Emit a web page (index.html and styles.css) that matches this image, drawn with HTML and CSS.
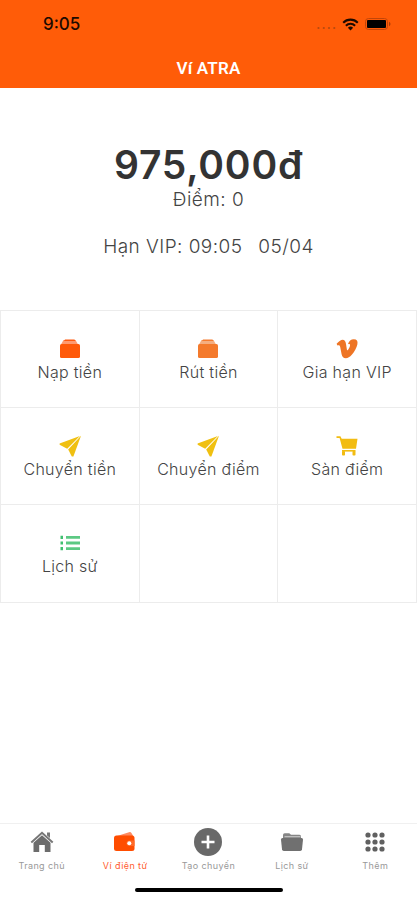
FILE: index.html
```html
<!DOCTYPE html>
<html lang="vi">
<head>
  <meta charset="UTF-8">
  <meta name="viewport" content="width=device-width, initial-scale=1">
  <title>Ví ATRA</title>
  <link rel="stylesheet" href="styles.css">
</head>
<body>
  <header class="header">
    <div class="status">
      <span class="status-time">9:05</span>
      <div class="status-icons">
        <svg width="19" height="4" viewBox="0 0 19 4" fill="#b54a10"><circle cx="1.5" cy="2" r="1.1"/><circle cx="6.8" cy="2" r="1.1"/><circle cx="12" cy="2" r="1.1"/><circle cx="17.3" cy="2" r="1.1"/></svg>
        <svg width="17" height="13" viewBox="0 0 17 13" fill="none" stroke="#1c0a00" stroke-width="2.1"><path d="M1.2 4.7a10.3 10.3 0 0 1 14.6 0"/><path d="M3.9 7.7a6.5 6.5 0 0 1 9.2 0"/><path d="M8.5 12.4 5.9 9.8a3.7 3.7 0 0 1 5.2 0z" fill="#1c0a00" stroke="none"/></svg>
        <svg width="26" height="12" viewBox="0 0 26 12"><rect x=".5" y=".5" width="22" height="11" rx="3" fill="none" stroke="#c24508"/><rect x="2" y="2" width="19" height="8" rx="1" fill="#000"/><path d="M24 3.8v4.4q1.5-.8 1.5-2.2T24 3.8z" fill="#a83c08"/></svg>
      </div>
    </div>
    <h1 class="title">Ví ATRA</h1>
  </header>

  <section class="balance">
    <div class="amount">975,000đ</div>
    <div class="points">Điểm: 0</div>
    <div class="expiry">Hạn VIP: 09:05 <span>05/04</span></div>
  </section>

  <main class="grid">
    <div class="cell">
      <svg class="icon" viewBox="0 0 22 22"><path d="M4.5 2h12l2.5 4.5H2z" fill="#ff9a70"/><path d="M6 1.4h9.500l1 1.500H5z" fill="#ff5a10"/><rect x="1" y="6" width="20" height="14" rx="1.6" fill="#ff5a0a"/></svg>
      <span class="label">Nạp tiền</span>
    </div>
    <div class="cell">
      <svg class="icon" viewBox="0 0 22 22"><path d="M4.5 2h12l2.5 4.5H2z" fill="#f5ae80"/><path d="M6 1.4h9.500l1 1.500H5z" fill="#f57c30"/><rect x="1" y="6" width="20" height="14" rx="1.6" fill="#f47a2c"/></svg>
      <span class="label">Rút tiền</span>
    </div>
    <div class="cell">
      <svg class="icon" viewBox="0 0 22 22" fill="#ee7525"><path d="M.6 5.800Q4.500 1.700 6.500 1.700c2.300 0 3.100 1.700 3.500 4.300l1 6.300c.9.200 2.600-2.600 3-4.600.3-1.600-.5-2-2.100-1.400C12.800 3.200 15 1.300 17.800 1.300c3 0 4.200 1.800 3.600 4.900-.6 3.300-2.900 7.300-5.400 10.300-2.200 2.600-4.200 3.700-6.200 3.700-2.300 0-3.600-1.500-4.200-4L4.200 9C3.800 7.300 3 6.700 1.500 7.500z"/></svg>
      <span class="label">Gia hạn VIP</span>
    </div>
    <div class="cell">
      <svg class="icon" viewBox="0 0 22 22" fill="#f0c010"><path d="M20.900.9.600 8.600v1.200l7.600 4z"/><path d="M22 .8 9.200 14.600l3.600 7h1.600z"/></svg>
      <span class="label">Chuyển tiền</span>
    </div>
    <div class="cell">
      <svg class="icon" viewBox="0 0 22 22" fill="#f0c010"><path d="M20.900.9.600 8.600v1.200l7.600 4z"/><path d="M22 .8 9.200 14.600l3.600 7h1.600z"/></svg>
      <span class="label">Chuyển điểm</span>
    </div>
    <div class="cell">
      <svg class="icon" viewBox="0 0 22 22" fill="#f2bc12"><path d="M.5 1.200h3.900l1.300 2.600H21.500l-1.500 10H6.500L3.600 3H.5z"/><path d="M6 15h13.500v1.600H6z"/><rect x="6" y="16" width="3" height="4.500" rx=".8"/><rect x="16.500" y="16" width="3" height="4.500" rx=".8"/></svg>
      <span class="label">Sàn điểm</span>
    </div>
    <div class="cell">
      <svg class="icon" viewBox="0 0 22 22" fill="#5cc983"><path d="M7 4h14v2.800H7zM7 9.600h14v2.800H7zM7 15.200h14V18H7z"/><path d="M1.500 3.800H4V7H1.500zM1.500 9.400H4v3.200H1.500zM1.500 15H4v3.200H1.500z" fill="#3fbf6f"/></svg>
      <span class="label">Lịch sử</span>
    </div>
    <div class="cell"></div>
    <div class="cell"></div>
  </main>

  <nav class="tabs">
    <div class="tab">
      <svg class="tab-icon" viewBox="0 0 28 28"><path d="M5.500 14.800 14 7.200l8.500 7.600V24h-5.700v-7h-5.600v7H5.500z" fill="#6c6c6c"/><path d="M19 4.500h3v5.500l-3-2.500z" fill="#777"/><path d="m3.300 14.500L14 4.800l10.700 9.700" fill="none" stroke="#777" stroke-width="2"/></svg>
      <span>Trang chủ</span>
    </div>
    <div class="tab active">
      <svg class="tab-icon" viewBox="0 0 28 28"><path d="M4.500 8.500 18 4.200q1.800-.4 2.600 1l1.900 3.300z" fill="#ff8a60"/><rect x="3" y="7.500" width="20.500" height="15.500" rx="2.500" fill="#ff4d00"/><path d="M15.500 15.200q0-2.700 3-2.700h5v5.400h-5q-3 0-3-2.700z" fill="#ff6a28"/><circle cx="18.300" cy="15.200" r="2" fill="#fff"/></svg>
      <span>Ví điện tử</span>
    </div>
    <div class="tab">
      <svg class="tab-icon" viewBox="0 0 28 28"><circle cx="14" cy="14" r="14" fill="#696969"/><path d="M14 7.500v13M7.500 14h13" stroke="#fff" stroke-width="2.600"/></svg>
      <span>Tạo chuyến</span>
    </div>
    <div class="tab">
      <svg class="tab-icon" viewBox="0 0 28 28"><path d="M5 10V7q0-1.700 1.700-1.700h4.600l1.700 1.500h8.500q1.500 0 1.500 1.500V10z" fill="#858585"/><path d="M6.500 8.700h16" stroke="#ccc"/><path d="M4.500 10h19q1.600 0 1.500 1.600l-1 9.600q-.2 1.800-1.800 1.800H5.800Q4.200 23 4 21.200l-1-9.600Q2.900 10 4.500 10z" fill="#707070"/></svg>
      <span>Lịch sử</span>
    </div>
    <div class="tab">
      <svg class="tab-icon" viewBox="0 0 28 28" fill="#606060"><circle cx="7" cy="7" r="2.600"/><circle cx="14" cy="7" r="2.600"/><circle cx="21" cy="7" r="2.600"/><circle cx="7" cy="14" r="2.600"/><circle cx="14" cy="14" r="2.600"/><circle cx="21" cy="14" r="2.600"/><circle cx="7" cy="21" r="2.600"/><circle cx="14" cy="21" r="2.600"/><circle cx="21" cy="21" r="2.600"/></svg>
      <span>Thêm</span>
    </div>
  </nav>
  <div class="home-bar"></div>
</body>
</html>
```
FILE: styles.css
```css
* {
    box-sizing: border-box;
}
body {
    background: #fff;
    color: #444;
    display: flex;
    flex-direction: column;
    font-family: "Inter", "Noto Sans", sans-serif;
    height: 900px;
    margin: 0;
    overflow: hidden;
}
svg {
    display: block;
}

/* header */
.header {
    background: #ff5c08;
    height: 88px;
}
.status {
    align-items: center;
    display: flex;
    height: 48px;
    justify-content: space-between;
    padding: 0 26px 0 43px;
}
.status-time {
    color: #1c0a00;
    font-size: 17px;
    font-weight: 500;
}
.status-icons {
    align-items: center;
    display: flex;
    gap: 6px;
}
.status-icons svg:first-child {
    margin-top: 8px;
}
.title {
    color: #fff;
    font-family: Roboto, sans-serif;
    font-size: 17px;
    font-weight: 600;
    letter-spacing: 0.2px;
    line-height: 40px;
    margin: 0;
    text-align: center;
}

/* balance */
.balance {
    height: 222px;
    padding-top: 52px;
    text-align: center;
}
.amount {
    color: #333;
    font-size: 39px;
    font-weight: 600;
    letter-spacing: 0.8px;
    line-height: 49px;
}
.points,
.expiry {
    font-size: 19px;
    font-weight: 300;
    letter-spacing: 0.45px;
    line-height: 22px;
}
.expiry {
    margin-top: 25px;
}
.expiry span {
    margin-left: 10px;
}

/* actions */
.grid {
    background: #ececec;
    border: 1px solid #ececec;
    display: grid;
    gap: 1px;
    grid-template-columns: repeat(3, 1fr);
    grid-template-rows: 96px 96px 97px;
}
.cell {
    align-items: center;
    background: #fff;
    display: flex;
    flex-direction: column;
    padding-top: 27px;
}
.icon {
    height: 22px;
    width: 22px;
}
.label {
    font-size: 16px;
    font-weight: 300;
    letter-spacing: 0.3px;
    line-height: 24px;
}

/* tab bar */
.tabs {
    border-top: 1px solid #f0f0f0;
    display: grid;
    grid-template-columns: repeat(5, 1fr);
    height: 65px;
    margin-top: auto;
    padding-top: 4px;
}
.tab {
    align-items: center;
    color: #999;
    display: flex;
    flex-direction: column;
    font-size: 9px;
    letter-spacing: 0.4px;
    line-height: 19px;
}
.tab.active {
    color: #ff5c30;
}
.tab-icon {
    height: 28px;
    width: 28px;
}
.home-bar {
    background: #000;
    border-radius: 2px;
    flex: none;
    height: 4px;
    margin: 0 auto 8px;
    width: 148px;
}
```
